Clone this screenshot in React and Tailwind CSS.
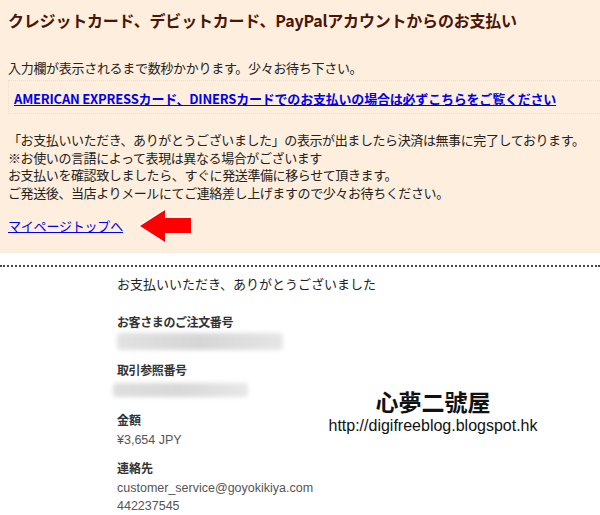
import React from "react";

const jp = { fontFamily: '"Noto Sans CJK JP", "Liberation Sans", sans-serif' };
const arial = { fontFamily: '"Liberation Sans", sans-serif' };

function RedArrow() {
  return (
    <svg width="58" height="36" viewBox="0 0 58 36" className="shrink-0">
      <polygon
        points="3,18 28,2 28,10 54,10 54,25 28,25 28,34"
        fill="#ff0000"
        stroke="#ffffff"
        strokeWidth="3"
        strokeLinejoin="round"
        paintOrder="stroke"
      />
    </svg>
  );
}

export default function App() {
  return (
    <div className="relative w-[600px] h-[515px] overflow-hidden bg-white text-[#222]" style={jp}>
      {/* payment notice */}
      <div className="h-[253px] bg-[#feeedd] pl-2 pt-2">
        <h1 className="text-[16px] leading-6 font-bold text-[#4a1506] tracking-[-0.2px]">
          クレジットカード、デビットカード、PayPalアカウントからのお支払い
        </h1>
        <p className="mt-[27px] text-[13px] leading-[18px] tracking-[-0.3px]">
          入力欄が表示されるまで数秒かかります。少々お待ち下さい。
        </p>
        <div className="mt-[3px] border border-dotted border-[#f3dcc4] border-r-0 pl-[5px] py-[4px]">
          <a href="#" className="text-[13px] leading-[18px] font-bold text-[#0000ee] underline tracking-[-0.2px]">
            AMERICAN EXPRESSカード、DINERSカードでのお支払いの場合は必ずこちらをご覧ください
          </a>
        </div>
        <p className="mt-[17px] text-[13px] leading-[17.5px] tracking-[-0.4px]">
          「お支払いいただき、ありがとうございました」の表示が出ましたら決済は無事に完了しております。
          <br />
          ※お使いの言語によって表現は異なる場合がございます
          <br />
          お支払いを確認致しましたら、すぐに発送準備に移らせて頂きます。
          <br />
          ご発送後、当店よりメールにてご連絡差し上げますので少々お待ちください。
        </p>
        <div className="mt-[7px] flex items-center gap-[14px]">
          <a href="#" className="text-[13px] leading-[18px] text-[#0000ee] underline tracking-[-0.2px]">
            マイページトップへ
          </a>
          <RedArrow />
        </div>
      </div>

      <div className="mt-[12px] border-t-2 border-dotted border-[#444]" />

      {/* PayPal receipt */}
      <div className="pl-[117px] text-[#333]">
        <p className="mt-[8px] text-[13px] leading-[18px] text-[#222]">お支払いいただき、ありがとうございました</p>
        <p className="mt-[21px] text-[12px] leading-4 font-bold tracking-[-0.4px]">お客さまのご注文番号</p>
        <div className="mt-[3px] h-[17px] w-[166px] rounded-sm bg-linear-to-r from-[#e2e2e2] via-[#d6d6d6] to-[#e6e6e6] blur-[2px]" />
        <p className="mt-[12px] text-[12px] leading-4 font-bold tracking-[-0.4px]">取引参照番号</p>
        <div className="mt-[5px] ml-[-4px] h-[14px] w-[135px] rounded-sm bg-linear-to-r from-[#dedede] via-[#d8d8d8] to-[#e8e8e8] blur-[2px]" />
        <p className="mt-[15px] text-[12px] leading-4 font-bold">金額</p>
        <p className="mt-[3px] text-[12.5px] leading-[18px] text-[#555]" style={arial}>
          ¥3,654 JPY
        </p>
        <p className="mt-[11px] text-[12px] leading-4 font-bold">連絡先</p>
        <div className="mt-[3px] text-[12.5px] leading-[18px] text-[#555]" style={arial}>
          <p>customer_service@goyokikiya.com</p>
          <p>442237545</p>
        </div>
      </div>

      {/* watermark */}
      <div className="absolute left-[318px] top-[386px] w-[230px] text-center text-[#111]">
        <p className="text-[23px] leading-[30px] font-bold" style={{ fontFamily: '"Noto Sans CJK TC", sans-serif' }}>
          心夢二號屋
        </p>
        <p className="text-[16px] leading-[20px]" style={arial}>
          http://digifreeblog.blogspot.hk
        </p>
      </div>
    </div>
  );
}
